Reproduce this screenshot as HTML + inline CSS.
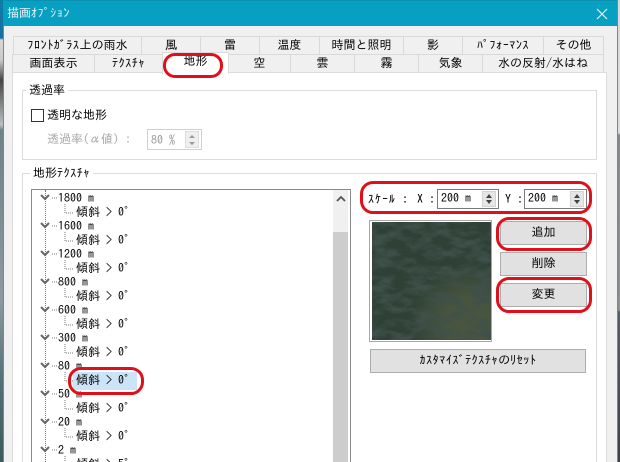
<!DOCTYPE html>
<html lang="ja"><head><meta charset="utf-8"><style>
html,body{margin:0;padding:0;width:620px;height:462px;overflow:hidden}
body{background:#f0f0f0;font:12px/14px "IPAGothic","Liberation Sans","Noto Sans CJK JP",sans-serif;color:#000}
#w{position:absolute;left:0;top:0;width:620px;height:462px;overflow:hidden;background:#f0f0f0}
#w div{position:absolute;box-sizing:border-box}
.t{white-space:nowrap}
.h{letter-spacing:.6px}
#w .tab{background:#f0f0f0;border:1px solid #d9d9d9;text-align:center;white-space:nowrap;height:19px;line-height:16px}
#w .r{border:3px solid #e0101a;border-radius:13px;background:transparent}
#w .btn{background:#e1e1e1;border:1px solid #adadad;text-align:center;line-height:20px;left:500px;width:87px;height:24px}
#w .inp{background:#fff;border:1px solid #7a7a7a;height:20px;line-height:17px;padding-left:3px;white-space:nowrap}
#w .spin{background:#e6e6e6;border:1px solid #d4d4d4;width:14px;height:16px;top:1px}
#w .spin:before{content:"";position:absolute;left:3px;top:2px;border-left:3px solid transparent;border-right:3px solid transparent;border-bottom:4px solid #444}
#w .spin:after{content:"";position:absolute;left:3px;top:8px;border-left:3px solid transparent;border-right:3px solid transparent;border-top:4px solid #444}
.grp{border:1px solid #dcdcdc;background:#fff}
.leg{background:#fff;padding:0 3px;white-space:nowrap}
.dv{border-left:1px dotted #777}
</style></head><body><div id="w">

<!-- outer edges -->
<div style="left:0;top:0;width:3px;height:462px;background:linear-gradient(#0d7ea6 0,#1a6ea0 38px,#d8d8d8 40px,#c9c9c9 60px,#444 80px,#b9c0c2 125px,#6f8288 130px,#8b9a9e 300px,#557078 380px,#3c5a58 462px)"></div>
<div style="left:3px;top:0;width:1px;height:462px;background:#2aa5c4"></div>
<div style="left:617px;top:0;width:3px;height:462px;background:linear-gradient(#d9d9d9 0,#dcdcdc 133px,#85898c 135px,#8d9194 310px,#555d66 312px,#4c5560 360px,#3d4048 462px)"></div>
<div style="left:617px;top:0;width:1px;height:462px;background:#2aa5c4"></div>

<!-- title bar -->
<div style="left:3px;top:0;width:614px;height:26px;background:#08a0c2;border-top:1px solid #0a8fae"></div>
<div class="t" style="left:7px;top:6px;color:#e8f6fa">描画<span class="h">ｵﾌﾟｼｮﾝ</span></div>
<svg style="position:absolute;left:596px;top:8px" width="12" height="12"><path d="M1 1 L11 11 M11 1 L1 11" stroke="#e6f6fa" stroke-width="1.2" fill="none"/></svg>

<!-- tabs row 1 -->
<div class="tab" style="left:13px;top:36px;width:129px"><span class="h">ﾌﾛﾝﾄｶﾞﾗｽ</span>上の雨水</div>
<div class="tab" style="left:141px;top:36px;width:60px">風</div>
<div class="tab" style="left:200px;top:36px;width:60px">雷</div>
<div class="tab" style="left:259px;top:36px;width:61px">温度</div>
<div class="tab" style="left:319px;top:36px;width:85px">時間と照明</div>
<div class="tab" style="left:403px;top:36px;width:60px">影</div>
<div class="tab" style="left:462px;top:36px;width:82px"><span class="h">ﾊﾟﾌｫｰﾏﾝｽ</span></div>
<div class="tab" style="left:543px;top:36px;width:61px">その他</div>
<!-- tabs row 2 -->
<div class="tab" style="left:12px;top:54px;width:83px">画面表示</div>
<div class="tab" style="left:94px;top:54px;width:69px"><span class="h">ﾃｸｽﾁｬ</span></div>
<div class="tab" style="left:228px;top:54px;width:63px">空</div>
<div class="tab" style="left:290px;top:54px;width:65px">雲</div>
<div class="tab" style="left:354px;top:54px;width:65px">霧</div>
<div class="tab" style="left:418px;top:54px;width:65px">気象</div>
<div class="tab" style="left:482px;top:54px;width:122px">水の反射/水はね</div>

<!-- panel -->
<div style="left:12px;top:72px;width:595px;height:390px;background:#fff;border:1px solid #dcdcdc;border-bottom:0"></div>
<div style="left:162px;top:52px;width:67px;height:22px;background:#fff;border:1px solid #dcdcdc;border-bottom:0;text-align:center;line-height:16px">地形</div>

<!-- group 1 -->
<div class="grp" style="left:22px;top:90px;width:575px;height:70px"></div>
<div class="leg" style="left:26px;top:83px">透過率</div>
<div style="left:31px;top:109px;width:13px;height:13px;border:1px solid #333;background:#fff"></div>
<div class="t" style="left:47px;top:108px;font-size:12px">透明な地形</div>
<div class="t" style="left:47px;top:132px;color:#a8a8a8">透過率(α値) :</div>
<div style="left:147px;top:129px;width:55px;height:21px;border:1px solid #d0d0d0;background:#fff;color:#999;padding:3px 0 0 3px;white-space:nowrap">80 %</div>
<div style="left:185px;top:131px;width:14px;height:17px;background:#efefef;border:1px solid #ddd"></div>
<svg style="position:absolute;left:186px;top:132px" width="12" height="16"><path d="M3 6 L6 3 L9 6 Z M3 10 L6 13 L9 10 Z" fill="#999"/></svg>

<!-- group 2 -->
<div class="grp" style="left:22px;top:173px;width:575px;height:300px"></div>
<div class="leg" style="left:30px;top:166px">地形<span class="h">ﾃｸｽﾁｬ</span></div>

<!-- tree -->
<div style="left:31px;top:189px;width:320px;height:280px;background:#fff;border:1px solid #8a8a8a"></div>
<div style="left:333px;top:190px;width:15px;height:272px;background:#f0f0f0"></div>
<div style="left:333px;top:232px;width:15px;height:230px;background:#cdcdcd"></div>
<svg style="position:absolute;left:336px;top:195px" width="10" height="8"><path d="M1 6 L5 2 L9 6" stroke="#555" stroke-width="1.8" fill="none"/></svg>

<div class="dv" style="left:45px;top:190px;height:272px"></div>
<div style="left:73px;top:372px;width:64px;height:18px;background:#cce4f7"></div>

<svg style="position:absolute;left:38px;top:190px;overflow:visible" width="40" height="272">
<g fill="none" stroke="#666" stroke-width="2">
<path d="M3 5 L7 9 L11 5M3 33 L7 37 L11 33M3 61 L7 65 L11 61M3 89 L7 93 L11 89M3 117 L7 121 L11 117M3 145 L7 149 L11 145M3 173 L7 177 L11 173M3 201 L7 205 L11 201M3 229 L7 233 L11 229M3 257 L7 261 L11 257"/>
</g>
<g fill="none" stroke="#777" stroke-width="1" stroke-dasharray="1 1">
<path d="M14 8 H19M14 36 H19M14 64 H19M14 92 H19M14 120 H19M14 148 H19M14 176 H19M14 204 H19M14 232 H19M14 260 H19"/>
<path d="M27 14 V23 H35M27 42 V51 H35M27 70 V79 H35M27 98 V107 H35M27 126 V135 H35M27 154 V163 H35M27 182 V191 H35M27 210 V219 H35M27 238 V247 H35M27 266 V275 H35"/>
</g>
</svg>

<div class="t" style="left:58px;top:191px">1800 m</div><div class="t" style="left:76px;top:205px">傾斜 &gt; 0°</div>
<div class="t" style="left:58px;top:219px">1600 m</div><div class="t" style="left:76px;top:233px">傾斜 &gt; 0°</div>
<div class="t" style="left:58px;top:247px">1200 m</div><div class="t" style="left:76px;top:261px">傾斜 &gt; 0°</div>
<div class="t" style="left:58px;top:275px">800 m</div><div class="t" style="left:76px;top:289px">傾斜 &gt; 0°</div>
<div class="t" style="left:58px;top:303px">600 m</div><div class="t" style="left:76px;top:317px">傾斜 &gt; 0°</div>
<div class="t" style="left:58px;top:331px">300 m</div><div class="t" style="left:76px;top:345px">傾斜 &gt; 0°</div>
<div class="t" style="left:58px;top:359px">80 m</div><div class="t" style="left:76px;top:373px">傾斜 &gt; 0°</div>
<div class="t" style="left:58px;top:387px">50 m</div><div class="t" style="left:76px;top:401px">傾斜 &gt; 0°</div>
<div class="t" style="left:58px;top:415px">20 m</div><div class="t" style="left:76px;top:429px">傾斜 &gt; 0°</div>
<div class="t" style="left:58px;top:443px">2 m</div><div class="t" style="left:76px;top:457px">傾斜 &gt; 5°</div>

<!-- scale row -->
<div class="t" style="left:368px;top:192px"><span class="h" style="letter-spacing:1px">ｽｹｰﾙ</span> :</div>
<div class="t" style="left:417px;top:192px">X :</div>
<div class="inp" style="left:437px;top:189px;width:62px">200 m
  <div class="spin" style="left:44px"></div></div>
<div class="t" style="left:505px;top:192px">Y :</div>
<div class="inp" style="left:524px;top:189px;width:63px">200 m
  <div class="spin" style="left:45px"></div></div>

<!-- texture -->
<div style="left:369px;top:220px;width:123px;height:122px;background:#fff;border:1px solid #a8a8a8"></div>
<svg style="position:absolute;left:372px;top:222px" width="119" height="118">
<defs>
<filter id="n" x="0" y="0" width="100%" height="100%"><feTurbulence type="fractalNoise" baseFrequency="0.05 0.11" numOctaves="4" seed="7"/><feColorMatrix type="matrix" values="0 0 0 0 0.05  0 0 0 0 0.08  0 0 0 0 0.07  3.2 0 0 0 -1.25"/></filter>
<radialGradient id="g" cx="0.82" cy="0.85" r="0.5"><stop offset="0.4" stop-color="#4f5a40" stop-opacity=".8"/><stop offset="1" stop-color="#4f5a40" stop-opacity="0"/></radialGradient>
</defs>
<rect width="119" height="118" fill="#2f4136"/>
<rect width="119" height="118" fill="url(#g)"/>
<rect width="119" height="118" filter="url(#n)"/>
</svg>

<!-- buttons -->
<div class="btn" style="top:221px">追加</div>
<div class="btn" style="top:252px">削除</div>
<div class="btn" style="top:283px">変更</div>
<div class="btn" style="left:370px;width:216px;top:349px"><span class="h">ｶｽﾀﾏｲｽﾞﾃｸｽﾁｬ</span>の<span class="h">ﾘｾｯﾄ</span></div>

<!-- red annotations -->
<div class="r" style="left:163px;top:53px;width:60px;height:25px;border-radius:12px"></div>
<div class="r" style="left:360px;top:181px;width:232px;height:33px"></div>
<div class="r" style="left:496px;top:217px;width:96px;height:34px"></div>
<div class="r" style="left:496px;top:277px;width:96px;height:36px"></div>
<div class="r" style="left:68px;top:367px;width:76px;height:28px"></div>
</div></body></html>
